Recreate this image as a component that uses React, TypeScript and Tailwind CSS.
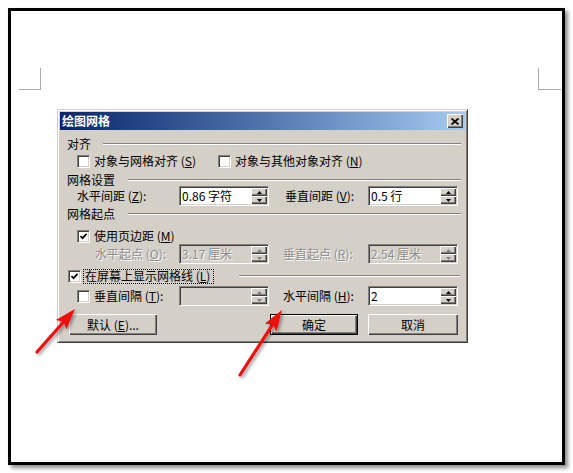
import React from "react";

const raised =
  "bg-[#d4d0c8] shadow-[inset_1px_1px_#ffffff,inset_-1px_-1px_#404040,inset_-2px_-2px_#808080]";
const sunken =
  "border border-[#808080] border-r-white border-b-white shadow-[inset_1px_1px_#404040,inset_-1px_-1px_#d4d0c8]";
const dim = "text-[#8c8c8c] [text-shadow:1px_1px_0_#ffffff]";

function Check({ checked }: { checked?: boolean }) {
  return (
    <span className={`flex size-[13px] shrink-0 items-center justify-center bg-white ${sunken}`}>
      {checked && (
        <svg width="9" height="9" viewBox="0 0 9 9">
          <path d="M1.5 4 L3.5 6.2 L7.6 1.8" fill="none" stroke="#000" strokeWidth="1.7" />
        </svg>
      )}
    </span>
  );
}

function Spin({ disabled }: { disabled?: boolean }) {
  const c = disabled ? "#808080" : "#000";
  return (
    <span className="flex w-[16px] shrink-0 flex-col">
      <span className={`flex h-[8px] items-center justify-center ${raised}`}>
        <svg width="5" height="3" viewBox="0 0 5 3">
          <polygon points="2.5,0 5,3 0,3" fill={c} />
        </svg>
      </span>
      <span className={`flex h-[8px] items-center justify-center ${raised}`}>
        <svg width="5" height="3" viewBox="0 0 5 3">
          <polygon points="0,0 5,0 2.5,3" fill={c} />
        </svg>
      </span>
    </span>
  );
}

function Field({ value, disabled }: { value: string; disabled?: boolean }) {
  return (
    <div
      className={`flex h-[20px] w-[90px] shrink-0 items-center pl-[2px] pr-[1px] ${sunken} ${
        disabled ? "bg-[#d4d0c8]" : "bg-white"
      }`}
    >
      <span className={`flex-1 whitespace-pre ${disabled ? dim : ""}`}>{value}</span>
      <Spin disabled={disabled} />
    </div>
  );
}

function Sep({ className = "" }: { className?: string }) {
  return <div className={`h-[2px] border-t border-b border-t-[#808080] border-b-white ${className}`} />;
}

function Btn({ label, def, w }: { label: React.ReactNode; def?: boolean; w: string }) {
  return (
    <div
      className={`flex h-[21px] items-center justify-center ${w} ${
        def
          ? "border border-black bg-[#d4d0c8] shadow-[inset_1px_1px_#ffffff,inset_-1px_-1px_#404040,inset_-2px_-2px_#808080]"
          : raised
      }`}
    >
      {label}
    </div>
  );
}

function Arrow({ x1, y1, x2, y2 }: { x1: number; y1: number; x2: number; y2: number }) {
  const dx = x2 - x1;
  const dy = y2 - y1;
  const len = Math.hypot(dx, dy);
  const ux = dx / len;
  const uy = dy / len;
  const nx = -uy;
  const ny = ux;
  const hl = 21;
  const hw = 7;
  const bx = x2 - ux * hl;
  const by = y2 - uy * hl;
  const mx = x2 - ux * (hl - 4);
  const my = y2 - uy * (hl - 4);
  const pts = `${x2},${y2} ${bx + nx * hw},${by + ny * hw} ${mx},${my} ${bx - nx * hw},${by - ny * hw}`;
  return (
    <g>
      <line x1={x1} y1={y1} x2={mx} y2={my} stroke="#f20d0d" strokeWidth="3.2" strokeLinecap="round" />
      <polygon points={pts} fill="#f20d0d" />
    </g>
  );
}

export default function App() {
  return (
    <div className="relative h-[473px] w-[573px] overflow-hidden bg-white pl-[8px] pt-[8px] font-['Noto_Sans_CJK_SC','Liberation_Sans',sans-serif] text-[12px] leading-[12px] text-black">
      <div className="h-[457px] w-[557px] border-[3px] border-black shadow-[3px_3px_4px_rgba(0,0,0,0.45)]">
        <div className="flex justify-between pl-[8px] pr-[1px] pt-[57px]">
          <div className="h-[22px] w-[22px] border-b border-r border-[#aaaaaa]" />
          <div className="h-[22px] w-[23px] border-b border-l border-[#aaaaaa]" />
        </div>

        <div className="ml-[46px] mt-[19px] w-[411px] border border-[#d4d0c8] border-b-[#404040] border-r-[#404040] bg-[#d4d0c8] p-[2px] shadow-[inset_1px_1px_#ffffff,inset_-1px_-1px_#808080]">
          <div className="flex h-[18px] items-center justify-between bg-gradient-to-r from-[#0a246a] to-[#a6caf0] pl-[2px] pr-[2px]">
            <span className="font-bold text-white">绘图网格</span>
            <span className={`flex h-[14px] w-[16px] items-center justify-center ${raised}`}>
              <svg width="8" height="7" viewBox="0 0 8 7">
                <path d="M0.5 0.5 L7.5 6.5 M7.5 0.5 L0.5 6.5" stroke="#000" strokeWidth="1.8" />
              </svg>
            </span>
          </div>

          <div className="flex flex-col pb-[5px]">
            <div className="mt-[8px] flex h-[12px] items-center pl-[7px] pr-[4px]">
              <span>对齐</span>
              <Sep className="ml-[12px] flex-1" />
            </div>

            <div className="mt-[4px] flex h-[14px] items-center pl-[17px]">
              <div className="flex w-[141px] items-center gap-[4px]">
                <Check />
                <span>对象与网格对齐 (<u>S</u>)</span>
              </div>
              <div className="flex items-center gap-[4px]">
                <Check />
                <span>对象与其他对象对齐 (<u>N</u>)</span>
              </div>
            </div>

            <div className="mt-[6px] flex h-[12px] items-center pl-[7px] pr-[4px]">
              <span>网格设置</span>
              <Sep className="ml-[13px] flex-1" />
            </div>

            <div className="flex h-[20px] items-center pl-[17px]">
              <span className="w-[102px]">水平间距 (<u>Z</u>):</span>
              <Field value="0.86 字符" />
              <span className="w-[99px] pl-[16px]">垂直间距 (<u>V</u>):</span>
              <Field value="0.5 行" />
            </div>

            <div className="mt-[2px] flex h-[12px] items-center pl-[7px] pr-[4px]">
              <span>网格起点</span>
              <Sep className="ml-[13px] flex-1" />
            </div>

            <div className="mt-[8px] flex h-[16px] items-center gap-[4px] pl-[17px]">
              <Check checked />
              <span>使用页边距 (<u>M</u>)</span>
            </div>

            <div className="flex h-[20px] items-center pl-[35px]">
              <span className={`w-[84px] ${dim}`}>水平起点 (<u>O</u>):</span>
              <Field value="3.17 厘米" disabled />
              <span className={`w-[99px] pl-[14px] ${dim}`}>垂直起点 (<u>R</u>):</span>
              <Field value="2.54 厘米" disabled />
            </div>

            <div className="mt-[4px] flex h-[16px] items-center pl-[8px] pr-[5px]">
              <Check checked />
              <span className="ml-[2px] flex h-[15px] w-[131px] items-center border border-dotted border-black pl-[1px]">
                在屏幕上显示网格线 (<u>L</u>)
              </span>
              <Sep className="ml-[25px] flex-1" />
            </div>

            <div className="mt-[2px] flex h-[20px] items-center pl-[17px]">
              <div className="flex w-[102px] items-center gap-[4px]">
                <Check />
                <span>垂直间隔 (<u>T</u>):</span>
              </div>
              <Field value="" disabled />
              <span className="w-[99px] pl-[14px]">水平间隔 (<u>H</u>):</span>
              <Field value="2" />
            </div>

            <div className="mt-[8px] flex items-center pl-[9px]">
              <Btn w="w-[88px]" label={<span>默认 (<u>E</u>)...</span>} />
              <div className="w-[113px]" />
              <Btn w="w-[88px]" def label="确定" />
              <div className="w-[10px]" />
              <Btn w="w-[90px]" label="取消" />
            </div>
          </div>
        </div>
      </div>

      <svg className="pointer-events-none absolute left-0 top-0" width="573" height="473">
        <defs>
          <filter id="sh" x="-20%" y="-20%" width="140%" height="140%">
            <feDropShadow dx="2" dy="2" stdDeviation="1.5" floodColor="#000" floodOpacity="0.35" />
          </filter>
        </defs>
        <g filter="url(#sh)">
          <Arrow x1={37} y1={352} x2={75} y2={309} />
          <Arrow x1={240} y1={375} x2={282} y2={310} />
        </g>
      </svg>
    </div>
  );
}
